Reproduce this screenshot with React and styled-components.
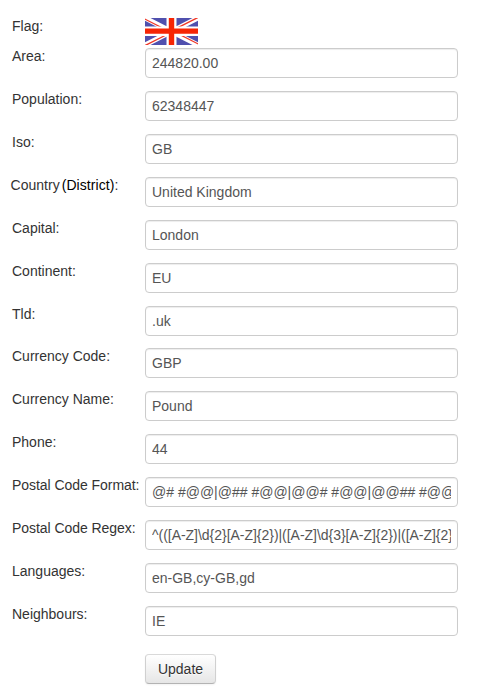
import React from "react";
import styled, { createGlobalStyle } from "styled-components";

const GlobalStyle = createGlobalStyle`
  body {
    margin: 0;
    background: #fff;
    color: #333;
    font: 14px/20px "Liberation Sans", Arial, sans-serif;
  }
`;

const Form = styled.form`
  box-sizing: border-box;
  width: 480px;
  height: 700px;
  padding: 16px 0 0 12px;
  overflow: hidden;
`;

const Row = styled.div`
  display: grid;
  grid-template-columns: 133px 313px;
  align-items: start;
  height: ${(p) => p.$height || 43}px;
`;

const Label = styled.label`
  white-space: nowrap;
  margin-left: ${(p) => p.$shift || 0}px;
  letter-spacing: ${(p) => p.$tracking || 0}px;
`;

const District = styled.span`
  color: #000;
  margin-left: 2px;
  letter-spacing: 0.08px;
`;

const Flag = styled.svg`
  display: block;
  width: 53px;
  height: 27px;
  margin-top: 2px;
`;

const Input = styled.input`
  box-sizing: border-box;
  width: 313px;
  height: 30px;
  margin: 2px 0 0;
  padding: 4px 6px;
  border: 1px solid #ccc;
  border-radius: 4px;
  background: #fff;
  box-shadow: inset 0 1px 1px rgba(0, 0, 0, 0.075);
  color: #555;
  font: inherit;
  letter-spacing: ${(p) => p.$tracking || 0}px;
  outline: none;
`;

const Button = styled.button`
  box-sizing: border-box;
  grid-column: 2;
  width: 71px;
  height: 30px;
  margin-top: 7px;
  padding: 4px 0;
  border: 1px solid #ccc;
  border-color: #d9d9d9 #d0d0d0 #b3b3b3;
  border-radius: 4px;
  background: linear-gradient(#fff, #e6e6e6);
  box-shadow: inset 0 1px 0 rgba(255, 255, 255, 0.2), 0 1px 2px rgba(0, 0, 0, 0.05);
  color: #333;
  font: inherit;
  text-shadow: 0 1px 1px rgba(255, 255, 255, 0.75);
`;

const fields = [
  { id: "area", label: "Area:", value: "244820.00" },
  { id: "population", label: "Population:", value: "62348447" },
  { id: "iso", label: "Iso:", value: "GB" },
  {
    id: "country",
    label: <>Country<District>(District)</District>:</>,
    value: "United Kingdom",
    shift: -1.4,
  },
  { id: "capital", label: "Capital:", value: "London" },
  { id: "continent", label: "Continent:", value: "EU" },
  { id: "tld", label: "Tld:", value: ".uk", height: 42 },
  { id: "currencyCode", label: "Currency Code:", value: "GBP" },
  { id: "currencyName", label: "Currency Name:", value: "Pound" },
  { id: "phone", label: "Phone:", value: "44" },
  {
    id: "postalFormat",
    label: "Postal Code Format:",
    labelTracking: -0.05,
    value: "@# #@@|@## #@@|@@# #@@|@@## #@@|@#@ #@@|@@#@ #@@|GIR0AA",
  },
  {
    id: "postalRegex",
    label: "Postal Code Regex:",
    labelTracking: -0.05,
    value: "^(([A-Z]\\d{2}[A-Z]{2})|([A-Z]\\d{3}[A-Z]{2})|([A-Z]{2}\\d{2}[A-Z]{2}))$",
    valueTracking: -0.03,
  },
  { id: "languages", label: "Languages:", value: "en-GB,cy-GB,gd" },
  { id: "neighbours", label: "Neighbours:", value: "IE" },
];

function UnionFlag() {
  return (
    <Flag viewBox="0 0 53 27" role="img" aria-label="United Kingdom">
      <rect width="53" height="27" fill="#5050ae" />
      <path d="M0 0L53 27M53 0L0 27" stroke="#fff" strokeWidth="5" />
      <path d="M-1 0.6L26 14.4M27 12.6L54 26.4M53 -0.6L26 13.1M27 14L0 27.6" stroke="#f03828" strokeWidth="1.3" />
      <path d="M26.5 0V27" stroke="#fff" strokeWidth="10" />
      <path d="M0 13.2H53" stroke="#fff" strokeWidth="9.4" />
      <path d="M26.5 0V27M0 13.1H53" stroke="#f62504" strokeWidth="5.4" />
    </Flag>
  );
}

export default function App() {
  return (
    <>
      <GlobalStyle />
      <Form onSubmit={(e) => e.preventDefault()}>
        <Row $height={30}>
          <Label>Flag:</Label>
          <UnionFlag />
        </Row>
        {fields.map((f) => (
          <Row key={f.id} $height={f.height}>
            <Label htmlFor={f.id} $shift={f.shift} $tracking={f.labelTracking}>
              {f.label}
            </Label>
            <Input
              id={f.id}
              defaultValue={f.value}
              spellCheck={false}
              $tracking={f.valueTracking}
            />
          </Row>
        ))}
        <Row>
          <Button type="submit">Update</Button>
        </Row>
      </Form>
    </>
  );
}
